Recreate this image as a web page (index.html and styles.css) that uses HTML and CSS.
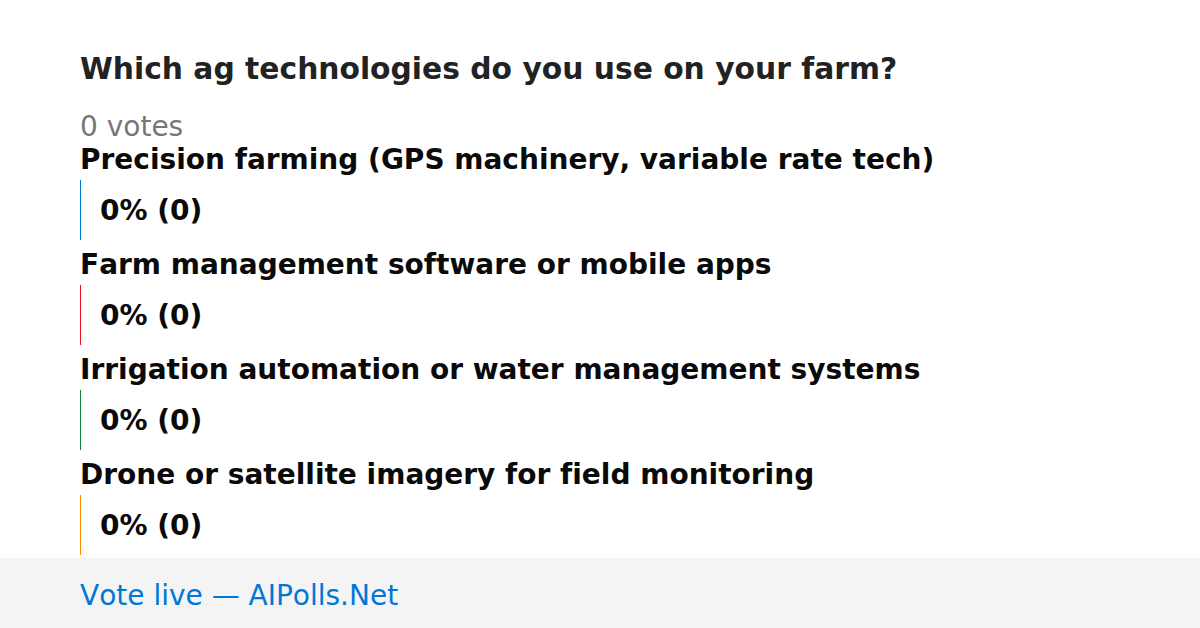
FILE: index.html
```html
<!DOCTYPE html>
<html lang="en">
<head>
  <meta charset="UTF-8" />
  <meta name="viewport" content="width=device-width, initial-scale=1.0"/>
  <title>Which ag technologies do you use on your farm?</title>
  <link rel="stylesheet" href="styles.css">
</head>
<body>
  <div class="poll">
    <h1 class="question">Which ag technologies do you use on your farm?</h1>
    <div class="votes">0 votes</div>

    <div class="options">
      <div class="option">
        <div class="label">Precision farming (GPS machinery, variable rate tech)</div>
        <div class="bar bar-blue">0% (0)</div>
      </div>
      <div class="option">
        <div class="label">Farm management software or mobile apps</div>
        <div class="bar bar-red">0% (0)</div>
      </div>
      <div class="option">
        <div class="label">Irrigation automation or water management systems</div>
        <div class="bar bar-green">0% (0)</div>
      </div>
      <div class="option">
        <div class="label">Drone or satellite imagery for field monitoring</div>
        <div class="bar bar-orange">0% (0)</div>
      </div>
    </div>
  </div>

  <div class="footer">Vote live — AIPolls.Net</div>
</body>
</html>
```

FILE: styles.css
```css
body {
  margin: 0;
  font-family: "DejaVu Sans", sans-serif;
  font-kerning: none;
  font-variant-ligatures: none;
  background: white;
}

.poll {
  height: 558px;
  box-sizing: border-box;
  padding: 52px 80px 0;
  overflow: hidden;
}

.question {
  margin: 0;
  font-size: 29.75px;
  line-height: 34px;
  font-weight: bold;
  color: #222;
}

.votes {
  margin-top: 26px;
  font-size: 28px;
  line-height: 30px;
  color: #777;
}

.options {
  margin-top: 3px;
}

.option {
  margin-bottom: 10px;
}

.label {
  font-size: 28px;
  line-height: 30px;
  font-weight: bold;
  color: #0a0a0a;
}

.bar {
  margin-top: 5px;
  height: 60px;
  display: flex;
  align-items: center;
  padding-left: 19px;
  border-left: 1px solid #0078d4;
  font-size: 28px;
  font-weight: bold;
  color: #0a0a0a;
}

.bar-blue { border-color: #0078d4; }
.bar-red { border-color: #e81123; }
.bar-green { border-color: #10893e; }
.bar-orange { border-color: #ff8c00; }

.footer {
  height: 70px;
  box-sizing: border-box;
  padding: 4px 0 0 80px;
  display: flex;
  align-items: center;
  background: #f4f4f4;
  color: #0078d4;
  font-size: 28px;
}
```
